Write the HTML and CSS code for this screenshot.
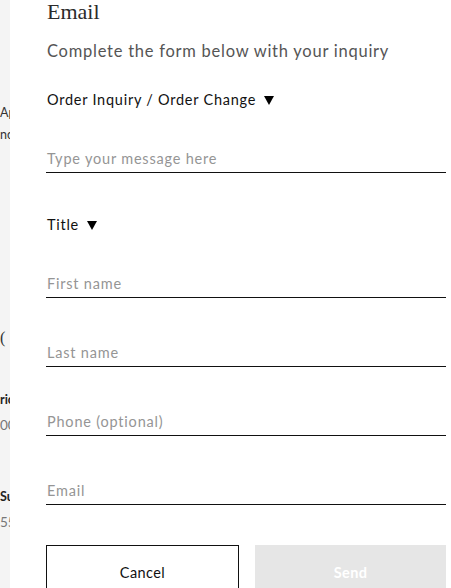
FILE: index.html
```html
<!DOCTYPE html>
<html>
<head>
<meta charset="utf-8">
<link rel="stylesheet" href="styles.css">
</head>
<body>
<div class="page">
  <div class="behind">
    <div class="b-line b1">Apple</div>
    <div class="b-line b2">nce</div>
    <div class="b-line b3">(</div>
    <div class="b-line b4">rice</div>
    <div class="b-line b5">00</div>
    <div class="b-line b6">Sub</div>
    <div class="b-line b7">55</div>
  </div>
  <div class="panel">
    <h1 class="title">Email</h1>
    <p class="subtitle">Complete the form below with your inquiry</p>
    <div class="select select-topic">Order Inquiry / Order Change <span class="caret"></span></div>
    <div class="field field-msg"><span class="ph">Type your message here</span></div>
    <div class="select select-title">Title <span class="caret"></span></div>
    <div class="field field-first"><span class="ph">First name</span></div>
    <div class="field"><span class="ph">Last name</span></div>
    <div class="field"><span class="ph">Phone (optional)</span></div>
    <div class="field"><span class="ph">Email</span></div>
    <div class="buttons">
      <div class="btn btn-cancel">Cancel</div>
      <div class="btn btn-send">Send</div>
    </div>
  </div>
</div>
</body>
</html>
```
FILE: styles.css
```css
html, body {
  margin: 0;
  padding: 0;
  background: #ffffff;
}
.page {
  display: flex;
  width: 451px;
  height: 588px;
  overflow: hidden;
}
.behind {
  width: 10px;
  flex: 0 0 10px;
  background: #f4f4f4;
  overflow: hidden;
  font-family: "Lato", "Liberation Sans", sans-serif;
  color: #555;
  white-space: nowrap;
}
.b-line { font-size: 12.5px; line-height: 14px; }
.b1 { margin-top: 106px; color: #333; }
.b2 { margin-top: 8px; color: #333; }
.b3 { margin-top: 186px; font-size: 16px; line-height: 20px; color: #333; font-family: "Liberation Serif", serif; }
.b4 { margin-top: 45px; font-weight: 700; color: #222; }
.b5 { margin-top: 11px; font-size: 13.5px; color: #777; }
.b6 { margin-top: 58px; font-weight: 700; color: #222; }
.b7 { margin-top: 11px; font-size: 13.5px; color: #777; }

.panel {
  flex: 1;
  padding: 0 5px 0 36px;
  font-family: "Lato", "Liberation Sans", sans-serif;
}
.title {
  margin: 0;
  font-family: "Liberation Serif", serif;
  font-weight: 400;
  font-size: 22px;
  line-height: 24px;
  color: #2b2b2b;
  margin-left: 1px;
}
.subtitle {
  margin: 17px 0 0 1px;
  font-size: 16.5px;
  line-height: 20px;
  color: #555;
  letter-spacing: 0.75px;
}
.select {
  display: flex;
  align-items: center;
  font-size: 14.5px;
  color: #111;
  margin-left: 1px;
  line-height: 18px;
  letter-spacing: 0.75px;
}
.select-topic { margin-top: 30px; }
.select-title { margin-top: 43px; }
.caret {
  display: inline-block;
  width: 0;
  height: 0;
  border-left: 5px solid transparent;
  border-right: 5px solid transparent;
  border-top: 9px solid #000;
  margin-left: 8px;
}
.field {
  border-bottom: 1px solid #111;
  display: flex;
  align-items: flex-end;
  box-sizing: border-box;
  margin-top: 44px;
  height: 25px;
  padding-bottom: 5px;
}
.field-msg { margin-top: 39px; }
.field-first { margin-top: 39px; }
.ph {
  font-size: 14.5px;
  color: #959595;
  margin-left: 1px;
  letter-spacing: 0.8px;
  line-height: 16px;
}
.buttons {
  display: flex;
  gap: 16px;
  margin-top: 40px;
}
.btn {
  flex: 1;
  height: 54px;
  box-sizing: border-box;
  display: flex;
  align-items: center;
  justify-content: center;
  font-size: 14.5px;
  letter-spacing: 0.4px;
}
.btn-cancel {
  border: 1px solid #111;
  color: #111;
}
.btn-send {
  background: #e6e6e6;
  color: #ffffff;
  font-weight: 700;
}
```
